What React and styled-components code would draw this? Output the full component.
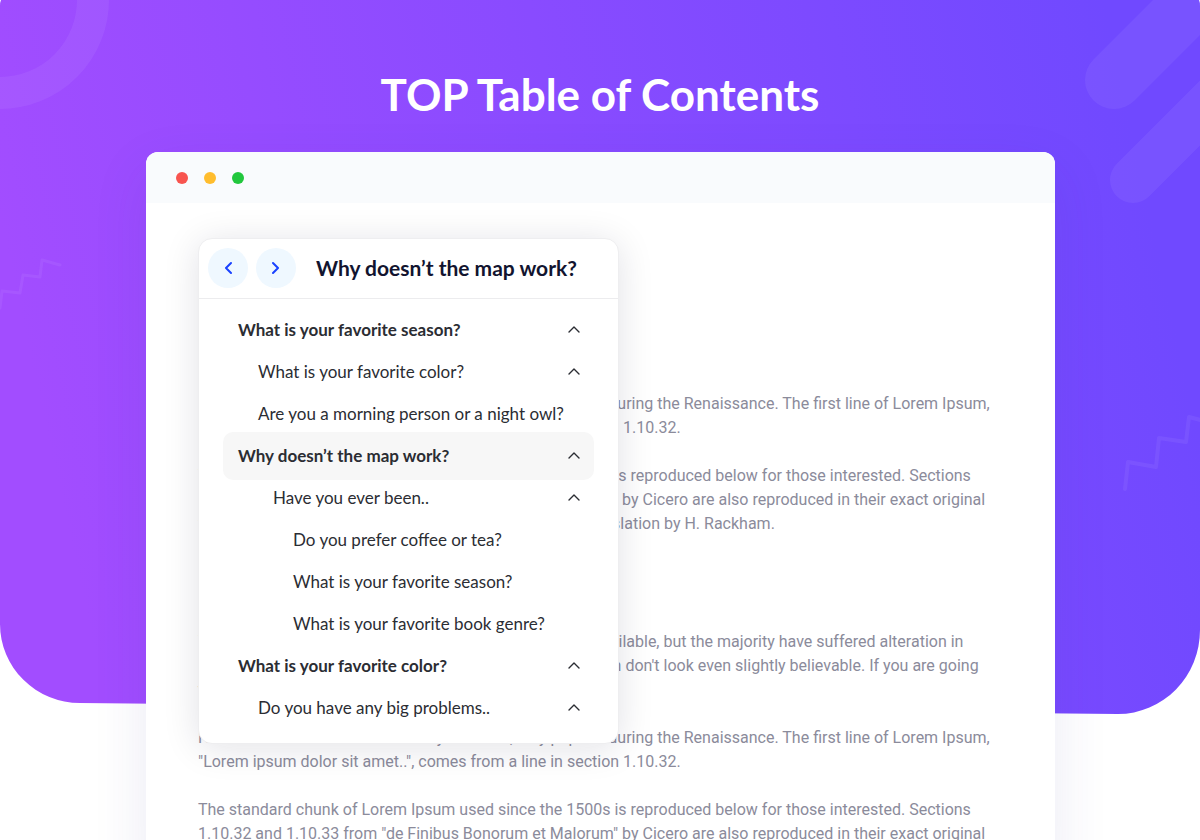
import React from 'react';
import styled, { createGlobalStyle } from 'styled-components';

const GlobalStyle = createGlobalStyle`
  * { box-sizing: border-box; }
  body { margin: 0; background: #fff; font-family: Lato, "Open Sans", sans-serif; }
  h1, h2, p, ul { margin: 0; padding: 0; }
  button { font: inherit; color: inherit; border: 0; cursor: pointer; }
`;

const Page = styled.main`
  position: relative;
  display: flex;
  flex-direction: column;
  height: 100vh;
  overflow: hidden;
`;

const Backdrop = styled.svg`
  position: absolute;
  top: 0;
  left: 0;
  width: 100%;
  height: 720px;
`;

const Title = styled.h1`
  position: relative;
  padding: 64px 24px 28px;
  color: #fff;
  font-size: 44px;
  font-weight: 700;
  line-height: 60px;
  text-align: center;
`;

const Window = styled.section`
  position: relative;
  flex: 1;
  margin: 0 145px 0 146px;
  background: #fff;
  border-radius: 12px 12px 0 0;
  box-shadow: 0 20px 56px rgba(60, 50, 150, 0.1);
`;

const WindowBar = styled.div`
  display: flex;
  align-items: center;
  gap: 16px;
  height: 51px;
  padding: 0 30px;
  background: #f9fbfd;
  border-radius: 12px 12px 0 0;
`;

const Dot = styled.span`
  width: 12px;
  height: 12px;
  border-radius: 50%;
  background: ${(p) => p.$color};
`;

const Article = styled.article`
  display: flex;
  flex-direction: column;
  gap: 94px;
  padding: 189px 52px 0;
  color: #8b8b9b;
  font-family: Roboto, Lato, sans-serif;
  font-size: 16px;
  line-height: 24px;
  white-space: nowrap;
`;

const Passage = styled.div`
  display: flex;
  flex-direction: column;
  gap: 24px;
`;

const Panel = styled.nav`
  position: absolute;
  top: 86px;
  left: 52px;
  width: 421px;
  background: #fff;
  border: 1px solid #eeeef0;
  border-radius: 14px;
  box-shadow: 0 4px 36px rgba(20, 20, 50, 0.12);
`;

const PanelHeader = styled.header`
  display: flex;
  align-items: center;
  gap: 8px;
  height: 60px;
  padding: 0 9px 1px;
  border-bottom: 1px solid #ececee;
`;

const RoundButton = styled.button`
  display: grid;
  place-items: center;
  width: 40px;
  height: 40px;
  padding: 0;
  color: #1a42ff;
  background: #eff8ff;
  border-radius: 50%;
`;

const PanelTitle = styled.h2`
  padding-left: 12px;
  color: #12142f;
  font-size: 21px;
  font-weight: 700;
  line-height: 28px;
`;

const Entries = styled.ul`
  padding: 10px 24px 14px;
  list-style: none;
`;

const Entry = styled.li`
  display: flex;
  height: 42px;
  align-items: center;
`;

const EntryButton = styled.button`
  display: flex;
  flex: none;
  align-items: center;
  justify-content: space-between;
  width: 100%;
  height: 48px;
  padding: 0 13px 0 ${(p) => p.$indent}px;
  color: #2b2d33;
  background: ${(p) => (p.$active ? '#f7f7f7' : 'transparent')};
  border-radius: 10px;
  font-size: 17px;
  font-weight: ${(p) => (p.$strong ? 700 : 400)};
  line-height: 24px;
  text-align: left;
  white-space: nowrap;
`;

const entries = [
  { text: 'What is your favorite season?', indent: 15, strong: true, open: true },
  { text: 'What is your favorite color?', indent: 35, open: true },
  { text: 'Are you a morning person or a night owl?', indent: 35 },
  { text: 'Why doesn’t the map work?', indent: 15, strong: true, open: true, active: true },
  { text: 'Have you ever been..', indent: 50, open: true },
  { text: 'Do you prefer coffee or tea?', indent: 70 },
  { text: 'What is your favorite season?', indent: 70 },
  { text: 'What is your favorite book genre?', indent: 70 },
  { text: 'What is your favorite color?', indent: 15, strong: true, open: true },
  { text: 'Do you have any big problems..', indent: 35, open: true },
];

function Chevron({ width, height, points, stroke }) {
  return (
    <svg width={width} height={height} viewBox={`0 0 ${width} ${height}`} fill="none" aria-hidden="true">
      <polyline points={points} stroke="currentColor" strokeWidth={stroke} strokeLinecap="round" strokeLinejoin="round" />
    </svg>
  );
}

function Renaissance() {
  return (
    <p>
      His book is a treatise on the theory of ethics, very popular during the Renaissance. The first line of Lorem Ipsum,
      <br />
      "Lorem ipsum dolor sit amet..", comes from a line in section 1.10.32.
    </p>
  );
}

function StandardChunk() {
  return (
    <p>
      The standard chunk of Lorem Ipsum used since the 1500s is reproduced below for those interested. Sections
      <br />
      1.10.32 and 1.10.33 from "de Finibus Bonorum et Malorum" by Cicero are also reproduced in their exact original
      <br />
      form, accompanied by English versions from the 1914 translation by H. Rackham.
    </p>
  );
}

export default function App() {
  return (
    <Page>
      <GlobalStyle />
      <Backdrop viewBox="0 0 1200 720" preserveAspectRatio="none" aria-hidden="true">
        <defs>
          <linearGradient id="violet" gradientUnits="userSpaceOnUse" x1="50" y1="450" x2="1150" y2="208">
            <stop offset="0" stopColor="#a24dff" />
            <stop offset="1" stopColor="#7049ff" />
          </linearGradient>
        </defs>
        <path d="M1 0H1199Q1200 2 1200 6V630A82 84 0 0 1 1118 714L80 703A80 79 0 0 1 0 624V6Q0 2 1 0Z" fill="url(#violet)" />
        <g stroke="#fff" strokeOpacity="0.06" fill="none">
          <circle cx="0" cy="0" r="93" strokeWidth="32" />
          <path d="M1114 80L1234 -40" strokeWidth="58" strokeLinecap="round" />
          <path d="M1133 180L1253 60" strokeWidth="46" strokeLinecap="round" />
          <g strokeWidth="3" strokeLinecap="round" strokeLinejoin="round">
            <path d="M0 308L2 291L20 293L23 275L40 277L42 260L60 265" />
            <path d="M1125 489L1128 462L1156 467L1159 438L1186 442L1189 417L1204 421" strokeWidth="4" />
          </g>
        </g>
      </Backdrop>
      <Title>TOP Table of Contents</Title>
      <Window>
        <WindowBar>
          <Dot $color="#f8544f" />
          <Dot $color="#ffbd2e" />
          <Dot $color="#22c73d" />
        </WindowBar>
        <Article>
          <Passage>
            <Renaissance />
            <StandardChunk />
          </Passage>
          <Passage>
            <p>
              There are many variations of passages of Lorem Ipsum available, but the majority have suffered alteration in
              <br />
              some form, by injected humour, or randomised words which don't look even slightly believable. If you are going
              <br />
              to use a passage of Lorem Ipsum.
            </p>
            <Renaissance />
            <StandardChunk />
          </Passage>
        </Article>
        <Panel aria-label="Table of contents">
          <PanelHeader>
            <RoundButton aria-label="Previous">
              <Chevron width={8} height={14} points="7,2 2,7 7,12" stroke={2} />
            </RoundButton>
            <RoundButton aria-label="Next">
              <Chevron width={8} height={14} points="1,2 6,7 1,12" stroke={2} />
            </RoundButton>
            <PanelTitle>Why doesn’t the map work?</PanelTitle>
          </PanelHeader>
          <Entries>
            {entries.map((e, i) => (
              <Entry key={i}>
                <EntryButton $indent={e.indent} $strong={e.strong} $active={e.active}>
                  {e.text}
                  {e.open && <Chevron width={14} height={8} points="2,6 7,1 12,6" stroke={1.4} />}
                </EntryButton>
              </Entry>
            ))}
          </Entries>
        </Panel>
      </Window>
    </Page>
  );
}
